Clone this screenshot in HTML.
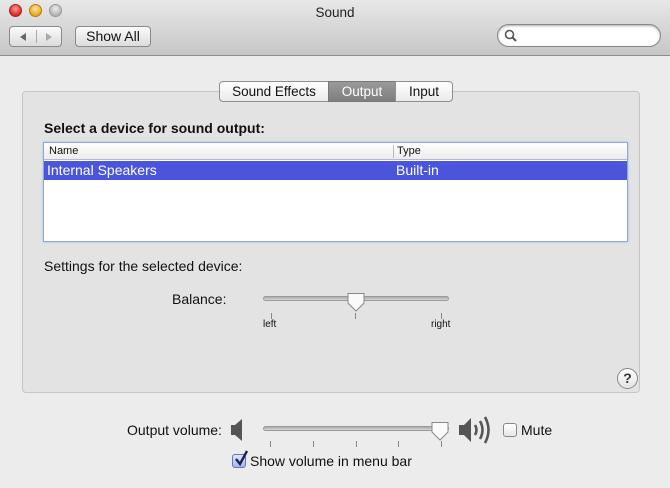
<!DOCTYPE html>
<html><head><meta charset="utf-8"><style>
*{box-sizing:border-box;margin:0;padding:0}
body{width:670px;height:488px;overflow:hidden;background:#ececec;font-family:"Liberation Sans",sans-serif;font-size:14px;color:#111;position:relative}
.abs{position:absolute}
#title{left:0;top:0;width:670px;height:56px;background:linear-gradient(#e8e8e8,#c6c6c6);border-bottom:1px solid #8e8e8e}
.light{width:13px;height:13px;border-radius:50%;top:4px}
.btn{border:1px solid #8a8a8a;border-radius:4px;background:linear-gradient(#fbfbfb,#dcdcdc);height:21px}
#group{left:22px;top:91px;width:618px;height:302px;background:#e3e3e3;border:1px solid #c6c6c6;border-radius:4px}
.tab{top:81px;height:21px;border:1px solid #8f8f8f;background:linear-gradient(#fff,#eaeaea);text-align:center;line-height:19px;font-size:13.5px}
.tick{width:1px;height:6px;background:#888}
.track{height:5px;border-radius:3px;background:linear-gradient(#a9a9a9,#d8d8d8);border:1px solid #9a9a9a}
</style></head><body>
<div id="title" class="abs">
 <div class="abs light" style="left:9px;background:radial-gradient(circle at 50% 35%,#ff9d93,#d9261d 70%);border:1px solid #a52a22"></div>
 <div class="abs light" style="left:29px;background:radial-gradient(circle at 50% 35%,#ffe7a0,#e9a51b 70%);border:1px solid #b57d15"></div>
 <div class="abs light" style="left:49px;background:radial-gradient(circle at 50% 35%,#eee,#b4b4b4 70%);border:1px solid #999"></div>
 <div class="abs" style="left:0;width:670px;top:5px;text-align:center;font-size:13.5px;color:#222">Sound</div>
 <div class="abs btn" style="left:9px;top:26px;width:53px">
  <div class="abs" style="left:26px;top:3px;width:1px;height:13px;background:#aaa"></div>
  <svg class="abs" style="left:8px;top:5px" width="10" height="10"><path d="M8 1L2 5L8 9Z" fill="#666"/></svg>
  <svg class="abs" style="left:34px;top:5px" width="10" height="10"><path d="M2 1L8 5L2 9Z" fill="#aaa"/></svg>
 </div>
 <div class="abs btn" style="left:75px;top:26px;width:76px;text-align:center;line-height:19px;font-size:14px">Show All</div>
 <div class="abs" style="left:497px;top:24px;width:164px;height:23px;border-radius:12px;background:#fff;border:1px solid #888;box-shadow:inset 0 1px 2px #aaa">
  <svg class="abs" style="left:6px;top:4px" width="14" height="14"><circle cx="5.5" cy="5.5" r="4" fill="none" stroke="#555" stroke-width="1.6"/><path d="M8.5 8.5L12 12" stroke="#555" stroke-width="2"/></svg>
 </div>
</div>
<div id="group" class="abs"></div>
<div class="abs tab" style="left:219px;width:110px;border-radius:4px 0 0 4px">Sound Effects</div>
<div class="abs tab" style="left:328px;width:68px;background:linear-gradient(#9a9a9a,#7e7e7e);color:#fff;border-color:#777">Output</div>
<div class="abs tab" style="left:395px;width:58px;border-radius:0 4px 4px 0">Input</div>
<div class="abs" style="left:44px;top:120px;font-weight:bold;font-size:14px">Select a device for sound output:</div>
<div class="abs" style="left:43px;top:142px;width:585px;height:100px;background:#fff;border:1px solid #8fa9d6;box-shadow:0 0 2px #9fb8e6">
 <div class="abs" style="left:0;top:0;width:583px;height:17px;background:linear-gradient(#fff,#ececec);border-bottom:1px solid #bbb;font-size:11px;line-height:17px">
  <span class="abs" style="left:5px">Name</span>
  <div class="abs" style="left:349px;top:2px;width:1px;height:13px;background:#bbb"></div>
  <span class="abs" style="left:353px">Type</span>
 </div>
 <div class="abs" style="left:0;top:18px;width:583px;height:19px;background:#4a55dc;color:#fff;font-size:14px;line-height:19px">
  <span class="abs" style="left:3px">Internal Speakers</span><span class="abs" style="left:352px">Built-in</span>
 </div>
</div>
<div class="abs" style="left:44px;top:258px">Settings for the selected device:</div>
<div class="abs" style="left:172px;top:291px">Balance:</div>
<div class="abs track" style="left:263px;top:296px;width:186px"></div>
<svg class="abs" style="left:346px;top:292px" width="20" height="22"><path d="M2 1.5H18V11L10 19L2 11Z" fill="#fafafa" stroke="#888"/></svg>
<div class="abs tick" style="left:271px;top:313px"></div>
<div class="abs tick" style="left:355px;top:313px"></div>
<div class="abs tick" style="left:441px;top:313px"></div>
<div class="abs" style="left:263px;top:319px;font-size:10px">left</div>
<div class="abs" style="left:431px;top:319px;font-size:10px">right</div>
<div class="abs" style="left:617px;top:368px;width:21px;height:21px;border-radius:50%;background:linear-gradient(#fff,#e4e4e4);border:1px solid #888;text-align:center;line-height:19px;font-weight:bold;font-size:14px;color:#333">?</div>
<div class="abs" style="left:127px;top:422px">Output volume:</div>
<svg class="abs" style="left:230px;top:418px" width="16" height="24"><path d="M1 7H5L12 1V23L5 17H1Z" fill="#555"/></svg>
<div class="abs track" style="left:263px;top:426px;width:186px"></div>
<svg class="abs" style="left:430px;top:421px" width="20" height="22"><path d="M2 1.5H18V11L10 19L2 11Z" fill="#fafafa" stroke="#888"/></svg>
<div class="abs tick" style="left:270px;top:441px"></div>
<div class="abs tick" style="left:313px;top:441px"></div>
<div class="abs tick" style="left:356px;top:441px"></div>
<div class="abs tick" style="left:398px;top:441px"></div>
<div class="abs tick" style="left:441px;top:441px"></div>
<svg class="abs" style="left:458px;top:414px" width="36" height="32"><path d="M1 11H6L13 4V28L6 21H1Z" fill="#555"/><path d="M17 11Q20 16 17 21" fill="none" stroke="#555" stroke-width="2.6"/><path d="M22 7Q27 16 22 25" fill="none" stroke="#555" stroke-width="2.6"/><path d="M27 3Q34 16 27 29" fill="none" stroke="#555" stroke-width="2.6"/></svg>
<div class="abs" style="left:503px;top:423px;width:14px;height:14px;border:1px solid #888;border-radius:3px;background:linear-gradient(#fff,#e6e6e6)"></div>
<div class="abs" style="left:521px;top:422px">Mute</div>
<div class="abs" style="left:232px;top:454px;width:14px;height:14px;border:1px solid #6677aa;border-radius:3px;background:linear-gradient(#dfe8fb,#9fb6ee)"></div>
<svg class="abs" style="left:233px;top:449px" width="16" height="18"><path d="M3 10L7 15L14 2" fill="none" stroke="#1a2450" stroke-width="2.4"/></svg>
<div class="abs" style="left:250px;top:453px">Show volume in menu bar</div>
</body></html>
